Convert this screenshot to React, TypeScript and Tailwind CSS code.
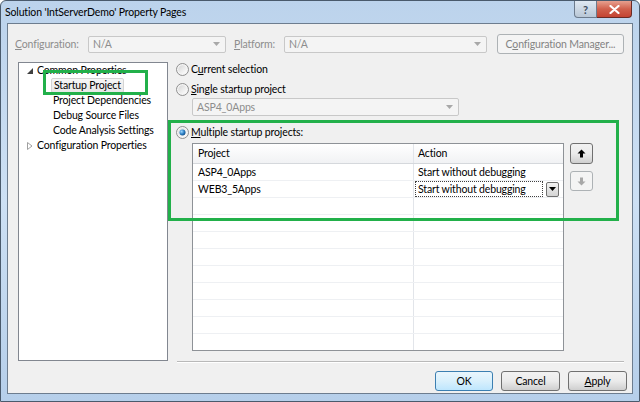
import React from "react";

const font = { fontFamily: 'Lato, "Noto Sans", sans-serif' };

function Radio({ checked }: { checked?: boolean }) {
  return (
    <svg width="13" height="13" viewBox="0 0 13 13" className="shrink-0">
      <defs>
        <linearGradient id={checked ? "rfc" : "rf"} x1="0" y1="0" x2="1" y2="1">
          <stop offset="0" stopColor="#d6d6d6" />
          <stop offset="1" stopColor="#ffffff" />
        </linearGradient>
        <radialGradient id="dot" cx="0.35" cy="0.35" r="0.7">
          <stop offset="0" stopColor="#9fd8ff" />
          <stop offset="0.6" stopColor="#2c7fc4" />
          <stop offset="1" stopColor="#13508a" />
        </radialGradient>
      </defs>
      <circle cx="6.5" cy="6.5" r="6" fill="#f4f4f4" stroke="#8f8f8f" />
      <circle cx="6.5" cy="6.5" r="4.3" fill={`url(#${checked ? "rfc" : "rf"})`} />
      {checked && <circle cx="6.5" cy="6.5" r="3" fill="url(#dot)" />}
    </svg>
  );
}

function ComboArrow({ color = "#9a9a9a" }: { color?: string }) {
  return (
    <svg width="7" height="4" viewBox="0 0 7 4">
      <path d="M0 0 H7 L3.5 4 Z" fill={color} />
    </svg>
  );
}

function DisabledCombo({ text, className }: { text: string; className: string }) {
  return (
    <div
      className={`flex items-center justify-between border border-[#c8c8c8] bg-[#f4f4f4] rounded-[2px] pl-[4px] pr-[5px] text-[#8d8d8d] ${className}`}
    >
      <span>{text}</span>
      <ComboArrow color="#a8a8a8" />
    </div>
  );
}

function DlgButton({
  children,
  w,
  primary,
  disabled,
}: {
  children: React.ReactNode;
  w: string;
  primary?: boolean;
  disabled?: boolean;
}) {
  return (
    <div
      className={`${w} h-[20px] flex items-center justify-center rounded-[3px] border ${
        primary
          ? "border-[#3c7fb1] bg-gradient-to-b from-[#eaf6fd] via-[#d9f0fc] to-[#bee6fd]"
          : disabled
          ? "border-[#adb2b5] bg-[#f4f4f4] text-[#838383]"
          : "border-[#707070] bg-gradient-to-b from-[#f2f2f2] via-[#ebebeb] to-[#cfcfcf]"
      }`}
    >
      {children}
    </div>
  );
}

function TreeItem({ children, indent }: { children: React.ReactNode; indent?: boolean }) {
  return <div className={`h-[15px] flex items-center ${indent ? "pl-[26px]" : ""}`}>{children}</div>;
}

export default function App() {
  const emptyRows = Array.from({ length: 9 });
  return (
    <div
      className="relative w-[640px] h-[402px] flex flex-col overflow-hidden whitespace-nowrap rounded-t-[6px] border border-[#4a5a6c] bg-gradient-to-b from-[#bcd3ec] via-[#cde0f4] to-[#b6cfea] text-[10.5px] tracking-[-0.15px] text-black leading-none"
      style={font}
    >
      {/* Title bar */}
      <div className="h-[22px] flex items-start justify-between">
        <div className="pl-[4px] pt-[6px]">Solution 'IntServerDemo' Property Pages</div>
        <div className="flex mr-[7px]">
          <div className="w-[23px] h-[17px] flex items-center justify-center rounded-bl-[4px] border border-t-0 border-[#6c7a8c] bg-gradient-to-b from-[#dfe8f2] to-[#b9c7d6] text-[11px] font-bold text-[#3d4c5e]">
            ?
          </div>
          <div className="w-[35px] h-[17px] flex items-center justify-center rounded-br-[4px] border border-t-0 border-l-0 border-[#6a2a25] bg-gradient-to-b from-[#e6a08f] via-[#d0604c] to-[#c44332]">
            <svg width="11" height="9" viewBox="0 0 11 9">
              <path d="M1.5 1 L9.5 8 M9.5 1 L1.5 8" stroke="#fff" strokeWidth="2.2" strokeLinecap="round" />
            </svg>
          </div>
        </div>
      </div>

      {/* Client area */}
      <div className="mx-[6px] mb-[7px] flex-1 flex flex-col border border-[#6d7d8f] bg-[#f0f0f0]">
        {/* Configuration row */}
        <div className="mt-[10px] h-[20px] flex items-center">
          <div className="w-[80px] pl-[7px] text-[#8d8d8d]">
            <u>C</u>onfiguration:
          </div>
          <DisabledCombo text="N/A" className="w-[138px] h-[17px]" />
          <div className="ml-[8px] w-[50px] text-[#8d8d8d]">
            <u>P</u>latform:
          </div>
          <DisabledCombo text="N/A" className="w-[203px] h-[17px]" />
          <div className="ml-[10px]">
            <DlgButton w="w-[127px]" disabled>
              <span>
                C<u>o</u>nfiguration Manager...
              </span>
            </DlgButton>
          </div>
        </div>

        {/* Main */}
        <div className="mt-[8px] h-[299px] flex">
          {/* Tree */}
          <div className="ml-[10px] w-[150px] border border-[#828790] bg-white pl-[8px]">
            <TreeItem>
              <svg width="6" height="6" viewBox="0 0 6 6" className="mr-[4px]">
                <path d="M6 0 V6 H0 Z" fill="#404040" />
              </svg>
              <span>Common Properties</span>
            </TreeItem>
            <TreeItem>
              <div className="ml-[24px] h-[15px] px-[2px] flex items-center rounded-[2px] border border-[#d4d4d4] bg-gradient-to-b from-[#f6f6f6] to-[#e8e8e8]">
                Startup Project
              </div>
            </TreeItem>
            <TreeItem indent>Project Dependencies</TreeItem>
            <TreeItem indent>Debug Source Files</TreeItem>
            <TreeItem indent>Code Analysis Settings</TreeItem>
            <TreeItem>
              <svg width="6" height="8" viewBox="0 0 6 8" className="mr-[4px]">
                <path d="M0.5 0.5 L5 4 L0.5 7.5 Z" fill="none" stroke="#a0a0a0" />
              </svg>
              <span>Configuration Properties</span>
            </TreeItem>
          </div>

          {/* Right pane */}
          <div className="ml-[8px] flex-1 flex flex-col">
            <div className="h-[15px] flex items-center gap-[1px]">
              <Radio />
              <span className="ml-[1px]">
                C<u>u</u>rrent selection
              </span>
            </div>
            <div className="mt-[5px] h-[15px] flex items-center gap-[1px]">
              <Radio />
              <span className="ml-[1px]">
                <u>S</u>ingle startup project
              </span>
            </div>
            <DisabledCombo text="ASP4_0Apps" className="mt-[1px] ml-[16px] w-[267px] h-[18px]" />
            <div className="mt-[9px] h-[15px] flex items-center gap-[1px]">
              <Radio checked />
              <span className="ml-[1px]">
                <u>M</u>ultiple startup projects:
              </span>
            </div>

            <div className="mt-[3px] flex">
              {/* Grid */}
              <div className="ml-[16px] w-[372px] h-[208px] overflow-hidden border border-[#8e9297] bg-white">
                <div className="h-[20px] flex border-b border-[#d5d8dc] bg-gradient-to-b from-[#ffffff] to-[#f1f2f4]">
                  <div className="w-[221px] pl-[5px] flex items-center border-r border-[#e2e5ea]">Project</div>
                  <div className="flex-1 pl-[4px] flex items-center">Action</div>
                </div>
                <div className="h-[17px] flex border-b border-[#eef0f3]">
                  <div className="w-[221px] pl-[5px] flex items-center border-r border-[#e2e5ea]">ASP4_0Apps</div>
                  <div className="flex-1 pl-[4px] flex items-center">Start without debugging</div>
                </div>
                <div className="h-[17px] flex border-b border-[#eef0f3]">
                  <div className="w-[221px] pl-[5px] flex items-center border-r border-[#e2e5ea]">WEB3_5Apps</div>
                  <div className="flex-1 flex items-center pl-[1px]">
                    <div className="w-[128px] h-[16px] flex items-center pl-[2px] border border-dotted border-[#404040]">
                      Start without debugging
                    </div>
                    <div className="ml-[3px] w-[13px] h-[15px] flex items-center justify-center rounded-[2px] border border-[#707070] bg-gradient-to-b from-[#f2f2f2] to-[#d4d4d4]">
                      <ComboArrow color="#000" />
                    </div>
                  </div>
                </div>
                {emptyRows.map((_, i) => (
                  <div key={i} className="h-[17px] flex border-b border-[#eef0f3]">
                    <div className="w-[221px] border-r border-[#e2e5ea]" />
                    <div className="flex-1" />
                  </div>
                ))}
              </div>

              {/* Move buttons */}
              <div className="ml-[6px] flex flex-col">
                <div className="w-[23px] h-[21px] flex items-center justify-center rounded-[3px] border border-[#707070] bg-gradient-to-b from-[#f2f2f2] via-[#ebebeb] to-[#cfcfcf]">
                  <svg width="9" height="9" viewBox="0 0 9 9">
                    <path d="M4.5 0.5 L8.5 4.5 H6 V8.5 H3 V4.5 H0.5 Z" fill="#000" />
                  </svg>
                </div>
                <div className="mt-[7px] w-[23px] h-[20px] flex items-center justify-center rounded-[3px] border border-[#adb2b5] bg-[#f4f4f4]">
                  <svg width="9" height="9" viewBox="0 0 9 9">
                    <path d="M4.5 8.5 L8.5 4.5 H6 V0.5 H3 V4.5 H0.5 Z" fill="#a8a8a8" />
                  </svg>
                </div>
              </div>
            </div>
          </div>
        </div>

        {/* Separator */}
        <div className="ml-[169px] mr-[8px] h-[2px] border-t border-[#b9b9b9] border-b border-b-white" />

        {/* Dialog buttons */}
        <div className="mt-[8px] flex justify-end gap-[8px] pr-[5px]">
          <DlgButton w="w-[58px]" primary>
            OK
          </DlgButton>
          <DlgButton w="w-[59px]">Cancel</DlgButton>
          <DlgButton w="w-[59px]">
            <span>
              <u>A</u>pply
            </span>
          </DlgButton>
        </div>
      </div>

      {/* Annotation boxes */}
      <div className="absolute left-[42px] top-[69px] w-[105px] h-[25px] border-[3px] border-[#22b04a]" />
      <div className="absolute left-[167px] top-[119px] w-[451px] h-[101px] border-[3px] border-[#22b04a]" />
    </div>
  );
}
